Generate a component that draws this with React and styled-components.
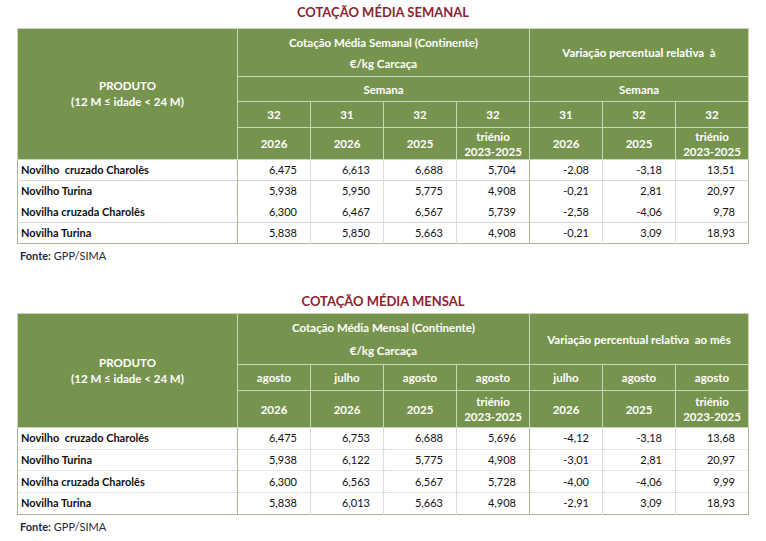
import React from 'react';
import styled, { createGlobalStyle } from 'styled-components';

const GlobalStyle = createGlobalStyle`
  body {
    margin: 0;
    background: #ffffff;
    font-family: Lato, "Liberation Sans", sans-serif;
  }
`;

const Page = styled.div`
  width: 766px;
  padding-top: 4px;
`;

const Section = styled.section`
  display: flex;
  flex-direction: column;
  margin-bottom: ${(p) => p.gap || 0}px;
`;

const Title = styled.h2`
  margin: 0 0 ${(p) => p.below ?? 8}px;
  text-align: center;
  font-size: 13px;
  line-height: 16px;
  font-weight: 700;
  color: #8b2332;
`;

const Table = styled.table`
  margin-left: 17px;
  width: 732px;
  border-collapse: collapse;
  table-layout: fixed;
  border: 1.5px solid #a7b79a;
  font-size: 11px;
`;

const HeadRow = styled.tr`
  height: ${(p) => p.h}px;
`;

const Th = styled.th`
  background: #77944f;
  color: #ffffff;
  font-size: 11.5px;
  font-weight: 700;
  text-align: center;
  vertical-align: middle;
  padding: 0 2px;
  line-height: ${(p) => p.lh || 15}px;
  border: 1px solid #c9d5bd;
  white-space: nowrap;
`;

const BodyRow = styled.tr`
  height: ${(p) => p.h}px;
  border-bottom: ${(p) => (p.line ? '1.5px solid #d6d6d6' : p.dotted ? '1px dotted #cfd6c8' : 'none')};
`;

const NameCell = styled.td`
  padding: 0 3px;
  font-weight: 700;
  color: #111111;
  line-height: 14px;
  border-right: 1px solid #a7b79a;
  white-space: pre;
`;

const NumCell = styled.td`
  padding: 0 13px 0 0;
  text-align: right;
  color: #111111;
  line-height: 14px;
  border-left: 1px solid ${(p) => (p.group ? '#a7b79a' : '#dcdcdc')};
`;

const Source = styled.p`
  margin: 5px 0 0 20px;
  font-size: 11px;
  color: #1f2a44;
  line-height: 14px;
`;

const weeklyRows = [
  ['Novilho  cruzado Charolês', '6,475', '6,613', '6,688', '5,704', '-2,08', '-3,18', '13,51'],
  ['Novilho Turina', '5,938', '5,950', '5,775', '4,908', '-0,21', '2,81', '20,97'],
  ['Novilha cruzada Charolês', '6,300', '6,467', '6,567', '5,739', '-2,58', '-4,06', '9,78'],
  ['Novilha Turina', '5,838', '5,850', '5,663', '4,908', '-0,21', '3,09', '18,93'],
];

const monthlyRows = [
  ['Novilho  cruzado Charolês', '6,475', '6,753', '6,688', '5,696', '-4,12', '-3,18', '13,68'],
  ['Novilho Turina', '5,938', '6,122', '5,775', '4,908', '-3,01', '2,81', '20,97'],
  ['Novilha cruzada Charolês', '6,300', '6,563', '6,567', '5,728', '-4,00', '-4,06', '9,99'],
  ['Novilha Turina', '5,838', '6,013', '5,663', '4,908', '-2,91', '3,09', '18,93'],
];

const Cols = () => (
  <colgroup>
    <col style={{ width: 220 }} />
    {Array.from({ length: 7 }).map((_, i) => (
      <col key={i} />
    ))}
  </colgroup>
);

const Produto = ({ span }) => (
  <Th rowSpan={span} lh={16}>
    PRODUTO
    <br />
    (12 M ≤ idade &lt; 24 M)
  </Th>
);

const Trienio = () => (
  <Th>
    triénio
    <br />
    2023-2025
  </Th>
);

// body rows shared by both tables
const Rows = ({ rows, h, line, dotted }) =>
  rows.map((r, i) => (
    <BodyRow key={r[0]} h={h} line={line && line.includes(i)} dotted={dotted && i < rows.length - 1}>
      <NameCell>{r[0]}</NameCell>
      {r.slice(1).map((v, j) => (
        <NumCell key={j} group={j === 0 || j === 4}>
          {v}
        </NumCell>
      ))}
    </BodyRow>
  ));

const App = () => (
  <Page>
    <GlobalStyle />
    <Section gap={30}>
      <Title>COTAÇÃO MÉDIA SEMANAL</Title>
      <Table>
        <Cols />
        <thead>
          <HeadRow h={48}>
            <Produto span={4} />
            <Th colSpan={4} lh={21}>
              Cotação Média Semanal (Continente)
              <br />
              €/kg Carcaça
            </Th>
            <Th colSpan={3}>Variação percentual relativa&nbsp; à</Th>
          </HeadRow>
          <HeadRow h={25}>
            <Th colSpan={4}>Semana</Th>
            <Th colSpan={3}>Semana</Th>
          </HeadRow>
          <HeadRow h={26}>
            {['32', '31', '32', '32', '31', '32', '32'].map((w, i) => (
              <Th key={i}>{w}</Th>
            ))}
          </HeadRow>
          <HeadRow h={32}>
            <Th>2026</Th>
            <Th>2026</Th>
            <Th>2025</Th>
            <Trienio />
            <Th>2026</Th>
            <Th>2025</Th>
            <Trienio />
          </HeadRow>
        </thead>
        <tbody>
          <Rows rows={weeklyRows} h={21} line={[0, 2]} />
        </tbody>
      </Table>
      <Source>
        <b>Fonte:</b> GPP/SIMA
      </Source>
    </Section>

    <Section>
      <Title below={4}>COTAÇÃO MÉDIA MENSAL</Title>
      <Table>
        <Cols />
        <thead>
          <HeadRow h={51}>
            <Produto span={3} />
            <Th colSpan={4} lh={23}>
              Cotação Média Mensal (Continente)
              <br />
              €/kg Carcaça
            </Th>
            <Th colSpan={3}>Variação percentual relativa&nbsp; ao mês</Th>
          </HeadRow>
          <HeadRow h={26}>
            {['agosto', 'julho', 'agosto', 'agosto', 'julho', 'agosto', 'agosto'].map((m, i) => (
              <Th key={i}>{m}</Th>
            ))}
          </HeadRow>
          <HeadRow h={37}>
            <Th>2026</Th>
            <Th>2026</Th>
            <Th>2025</Th>
            <Trienio />
            <Th>2026</Th>
            <Th>2025</Th>
            <Trienio />
          </HeadRow>
        </thead>
        <tbody>
          <Rows rows={monthlyRows} h={21.7} dotted />
        </tbody>
      </Table>
      <Source>
        <b>Fonte:</b> GPP/SIMA
      </Source>
    </Section>
  </Page>
);

export default App;
